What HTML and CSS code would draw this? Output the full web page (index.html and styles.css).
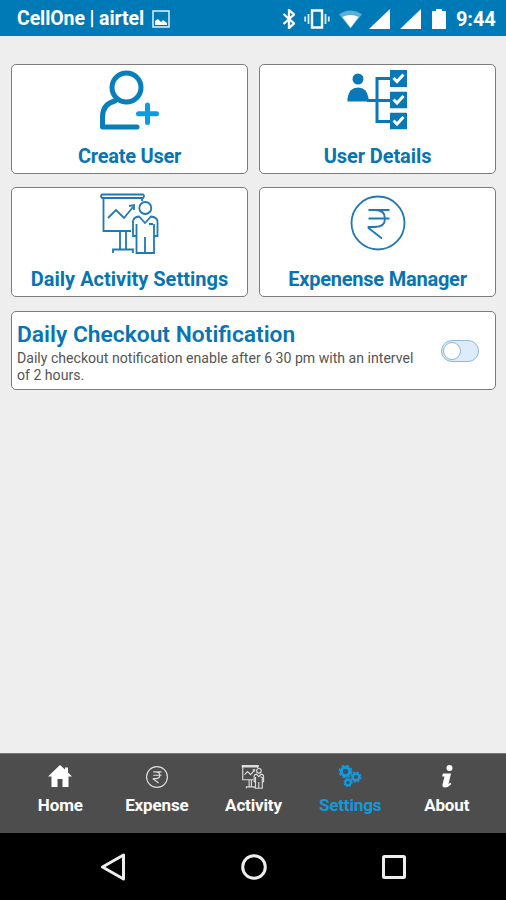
FILE: index.html
```html
<!DOCTYPE html>
<html lang="en">
<head>
<meta charset="utf-8">
<title>Settings</title>
<link rel="stylesheet" href="styles.css">
</head>
<body>
<svg class="defs" width="0" height="0" aria-hidden="true">
  <symbol id="presenter" viewBox="0 0 60 62">
    <path d="M2 1.500H43Q45 3 43 5H2Q0 3 2 1.500ZM3.500 5V38H31M42 5V8"/>
    <path d="M8 25L16 17L24 25L33 14M29 13L34 12V17M20 38V56M26 38V56M13 60V56.500H33V60"/>
    <circle cx="45.300" cy="15" r="6"/>
    <path d="M39 23.500Q34 24 33 28V43H36.500V60H54V43H57.500V28Q56.500 24 51 23.500L45 30ZM45 44V60M36.500 31V43M54 31V43M49 31H53"/>
  </symbol>
  <symbol id="rupee" viewBox="0 0 56 56">
    <circle cx="28" cy="28" r="26.500"/>
    <path d="M18.500 15H39.500M18.500 23.500H39.500M25 15Q35 15 35 23.500Q35 32 25 32H18.500V33L32 43.500"/>
  </symbol>
  <symbol id="check" viewBox="0 0 17 17">
    <path class="solid" d="M0 0H17V17H0Z"/><path class="tick" d="M3.500 8L7 11.500L13.500 4.500"/>
  </symbol>
</svg>
<header class="status">
  <span class="carrier">CellOne | airtel</span>
  <svg class="photo" width="18" height="18" viewBox="0 0 18 18"><path d="M1 1H17V17H1Z" fill="none" stroke="#dff3fc" stroke-width="1.500"/><path d="M3 15V11L6 9L9 12L11 10L15 13V15Z" fill="#fff"/></svg>
  <div class="signals">
    <svg width="14" height="20" viewBox="0 0 14 20"><path d="M2.500 5L13 14.500L8 19V1L13 5.500L2.500 15" fill="none" stroke="#fff" stroke-width="2.300"/></svg>
    <svg width="26" height="20" viewBox="0 0 26 20"><path d="M8 1.500H18V18.500H8Z" fill="none" stroke="#fff" stroke-width="2.400"/><path d="M4.500 5V15M1.200 7.500V12.500M21.500 5V15M24.800 7.500V12.500" fill="none" stroke="#d5edf8" stroke-width="1.800"/></svg>
    <svg width="23" height="20" viewBox="0 0 24 20"><path d="M0 5Q12-3 24 5L12 20Z" fill="#5faed6"/><path d="M3.500 8Q12 3.500 20.500 8L12 19Z" fill="#fff"/></svg>
    <svg class="bars" width="21" height="20" viewBox="0 0 21 20"><path d="M21 0V20H0Z" fill="#fff"/></svg>
    <svg width="21" height="20" viewBox="0 0 21 20"><path d="M21 0V20H0Z" fill="#fff"/></svg>
    <svg class="battery" width="14" height="20" viewBox="0 0 14 20"><path d="M4 0H10V2H14V20H0V2H4Z" fill="#fff"/></svg>
  </div>
  <span class="clock">9:44</span>
</header>
<main class="content">
  <section class="tiles">
    <a class="tile">
      <svg class="tile-icon" width="62" height="62" viewBox="0 0 62 62"><g fill="none" stroke="#087fba" stroke-width="5" stroke-linecap="round" stroke-linejoin="round"><circle cx="27.500" cy="17.500" r="14.500"/><path d="M16 31Q3.500 34 3.500 47V57H38"/></g><path d="M48.500 35V52.500M39.500 43.800H57.500" stroke="#0b9de2" stroke-width="5" stroke-linecap="round"/></svg>
      <span class="label create">Create User</span>
    </a>
    <a class="tile">
      <svg class="tile-icon" width="62" height="62" viewBox="0 0 62 62"><g fill="#0878b6"><circle cx="11" cy="9" r="5.500"/><path d="M.5 31.500V28Q2 17.500 11 17.500Q20 17.500 21.500 28V31.500Z"/></g><path d="M20 30.500H45M43 8.500H30V51.500H43" fill="none" stroke="#0878b6" stroke-width="3"/><use href="#check" x="43" y="0" width="17" height="17"/><use href="#check" x="43" y="21.500" width="17" height="17"/><use href="#check" x="43" y="42.500" width="17" height="17"/></svg>
      <span class="label details">User Details</span>
    </a>
    <a class="tile">
      <svg class="tile-icon line" width="60" height="62" viewBox="0 0 60 62"><use href="#presenter" width="60" height="62"/></svg>
      <span class="label activity">Daily Activity Settings</span>
    </a>
    <a class="tile">
      <svg class="tile-icon line rupee" width="56" height="56"><use href="#rupee"/></svg>
      <span class="label expense">Expenense Manager</span>
    </a>
  </section>
  <section class="notice">
    <div class="notice-text">
      <h1>Daily Checkout Notification</h1>
      <p>Daily checkout notification enable after 6 30 pm with an intervel<br>of 2 hours.</p>
    </div>
    <span class="switch"><i></i></span>
  </section>
</main>
<nav class="tabs">
  <a class="tab"><svg width="24" height="24" viewBox="0 0 24 24"><path d="M12 0L17 4.500V2.500H20V7.500L24 11.500H20.500V22H14.500V14H9.500V22H3.500V11.500H0Z" fill="#fff"/></svg><span>Home</span></a>
  <a class="tab"><svg class="mini" width="22" height="22" viewBox="0 0 56 56"><use href="#rupee"/></svg><span>Expense</span></a>
  <a class="tab"><svg class="mini" width="24" height="24" viewBox="0 0 60 62"><use href="#presenter"/></svg><span>Activity</span></a>
  <a class="tab active"><svg width="24" height="24" viewBox="0 0 24 24"><g fill="none" stroke="#1698db"><circle cx="7.500" cy="6.500" r="4.200" stroke-width="3"/><circle cx="7.500" cy="6.500" r="6.200" stroke-width="1.500" stroke-dasharray="2.870 2"/><circle cx="18" cy="12" r="3.300" stroke-width="2.500"/><circle cx="18" cy="12" r="5" stroke-width="1.300" stroke-dasharray="2.300 1.627"/><circle cx="10" cy="17.500" r="2.700" stroke-width="2"/><circle cx="10" cy="17.500" r="4" stroke-width="1.200" stroke-dasharray="1.800 1.342"/></g></svg><span>Settings</span></a>
  <a class="tab"><svg width="14" height="24" viewBox="0 0 14 24"><circle cx="9.500" cy="3" r="3" fill="#fff"/><path d="M3 8.500H11L8.500 19L11 17.500V19.500Q8 22.500 5 22.500Q2 22.500 2.500 19.500L4.500 11.500H2Z" fill="#fff"/></svg><span>About</span></a>
</nav>
<footer class="system">
  <svg width="26" height="28" viewBox="0 0 26 28"><path d="M23.500 2V26L2.500 14Z"/></svg>
  <svg width="26" height="28" viewBox="0 0 26 28"><circle cx="13" cy="14" r="11.300"/></svg>
  <svg width="26" height="28" viewBox="0 0 26 28"><rect x="2.500" y="3.500" width="21" height="21" rx="1"/></svg>
</footer>
</body>
</html>
```

FILE: styles.css
```css
* { box-sizing: border-box; }
body {
  margin: 0;
  width: 506px;
  height: 900px;
  display: flex;
  flex-direction: column;
  overflow: hidden;
  background: #eee;
  font-family: Roboto, "Liberation Sans", sans-serif;
}
svg { display: block; flex: none; }
.defs { position: absolute; }
.status {
  height: 36px;
  flex: none;
  display: flex;
  align-items: center;
  padding: 1px 10px 0 17px;
  background: #007ab7;
  color: #fff;
}
.carrier { width: 127px; font-size: 19.5px; font-weight: 700; letter-spacing: -.1px; white-space: nowrap; }
.photo { margin-left: 8px; }
.signals { display: flex; gap: 9px; margin-left: auto; }
.signals .bars { margin: 0 1px 0 -2px; }
.signals .battery { margin-left: 2px; }
.clock { width: 40px; margin-left: 10px; font-size: 20px; font-weight: 700; letter-spacing: -.1px; white-space: nowrap; }
.content { flex: 1; padding: 28px 10px 0 11px; }
.tiles { display: grid; grid-template-columns: 237px 237px; gap: 13px 11px; }
.tile, .notice { background: #fff; border: 1px solid #7b7b7b; border-radius: 5px; }
.tile { height: 110px; display: flex; flex-direction: column; align-items: center; padding-top: 5px; }
.tile-icon { height: 62px; }
.label { margin-top: 12px; font-size: 20px; line-height: 24px; font-weight: 700; color: #0875b2; white-space: nowrap; }
.create { letter-spacing: -.25px; }
.details { letter-spacing: -.08px; }
.expense { letter-spacing: -.23px; }
.line { fill: none; stroke: #2078b4; stroke-width: 1.800; }
.rupee { height: 56px; margin: 2px 0 4px; }
.solid { fill: #0878b6; }
.tick { fill: none; stroke: #fff; stroke-width: 3; }
.notice { height: 79px; margin-top: 14px; display: flex; align-items: center; justify-content: space-between; padding: 0 16px 0 5px; }
.notice h1 { margin: 3px 0 0; font-size: 22.8px; line-height: 28px; font-weight: 600; color: #0875b2; white-space: nowrap; }
.notice p { margin: 1px 0 0; font-size: 14.1px; line-height: 17px; color: #555; white-space: nowrap; }
.switch { width: 38px; height: 22px; padding: 1px; border: 1px solid #8db8df; border-radius: 11px; background: #dcecfb; }
.switch i { display: block; width: 18px; height: 18px; background: #fff; border: 1.5px solid #8db4dc; border-radius: 50%; }
.tabs { height: 80px; flex: none; display: grid; grid-template-columns: repeat(5, 1fr); padding: 11px 11px 0 12px; background: #4d4d4d; border-top: 1px solid #777; }
.tab { display: flex; flex-direction: column; align-items: center; color: #fff; font-size: 17px; line-height: 20px; font-weight: 700; letter-spacing: -.15px; }
.tab svg { height: 24px; }
.tab span { margin-top: 6px; white-space: nowrap; }
.tab.active { color: #1698db; }
.mini { fill: none; stroke: #ddd; stroke-width: 3; }
.system { height: 67px; flex: none; display: flex; justify-content: space-between; align-items: center; padding: 0 99px 0 100px; background: #000; }
.system svg { fill: none; stroke: #eee; stroke-width: 3; stroke-linejoin: round; }
```
